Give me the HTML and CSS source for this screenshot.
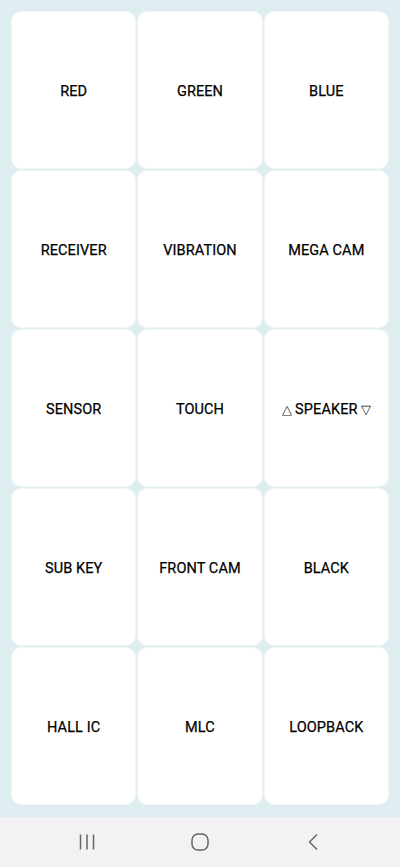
FILE: index.html
```html
<!DOCTYPE html>
<html>
<head>
<meta charset="utf-8">
<link rel="stylesheet" href="styles.css">
</head>
<body>
<div class="screen">
  <div class="grid">
    <div class="card">RED</div>
    <div class="card">GREEN</div>
    <div class="card">BLUE</div>
    <div class="card">RECEIVER</div>
    <div class="card">VIBRATION</div>
    <div class="card">MEGA CAM</div>
    <div class="card">SENSOR</div>
    <div class="card">TOUCH</div>
    <div class="card"><span class="tri">△</span>SPEAKER<span class="tri">▽</span></div>
    <div class="card">SUB KEY</div>
    <div class="card">FRONT CAM</div>
    <div class="card">BLACK</div>
    <div class="card">HALL IC</div>
    <div class="card">MLC</div>
    <div class="card">LOOPBACK</div>
  </div>
  <div class="nav">
    <svg class="ico" width="20" height="20" viewBox="0 0 20 20"><path d="M3.5 2.5v15M10 2.5v15M16.5 2.5v15" stroke="#666" stroke-width="1.5" fill="none"/></svg>
    <svg class="ico" width="20" height="20" viewBox="0 0 20 20"><rect x="2" y="2" width="16" height="16" rx="6" stroke="#666" stroke-width="1.5" fill="none"/></svg>
    <svg class="ico" width="20" height="20" viewBox="0 0 20 20"><path d="M14 2.5L6.5 10l7.5 7.5" stroke="#666" stroke-width="1.5" fill="none"/></svg>
  </div>
</div>
</body>
</html>
```
FILE: styles.css
```css
html, body {
  margin: 0;
  padding: 0;
}
body {
  width: 400px;
  height: 867px;
  overflow: hidden;
  background: #deedf0;
  font-family: Roboto, "Liberation Sans", sans-serif;
}
.screen {
  display: flex;
  flex-direction: column;
  height: 867px;
}
.grid {
  flex: 1;
  display: grid;
  grid-template-columns: repeat(3, 1fr);
  grid-template-rows: repeat(5, 158px);
  column-gap: 1px;
  row-gap: 1px;
  padding: 11px 11px 0 11px;
  align-content: start;
}
.card {
  background: #fff;
  border: 1px solid #f4f6f6;
  border-radius: 10px;
  display: flex;
  align-items: center;
  justify-content: center;
  font-size: 14.5px;
  font-weight: 400;
  color: #000;
  -webkit-text-stroke: 0.25px #000;
  letter-spacing: 0.1px;
  padding-top: 2px;
}
.tri {
  font-size: 12.5px;
  font-weight: 400;
  -webkit-text-stroke: 0;
  margin: 0 3px;
  color: #222;
}
.nav {
  height: 50px;
  background: #f2f2f4;
  display: flex;
  align-items: center;
  justify-content: center;
  gap: 93px;
  margin-left: -1px;
}
.ico {
  display: block;
}
```
